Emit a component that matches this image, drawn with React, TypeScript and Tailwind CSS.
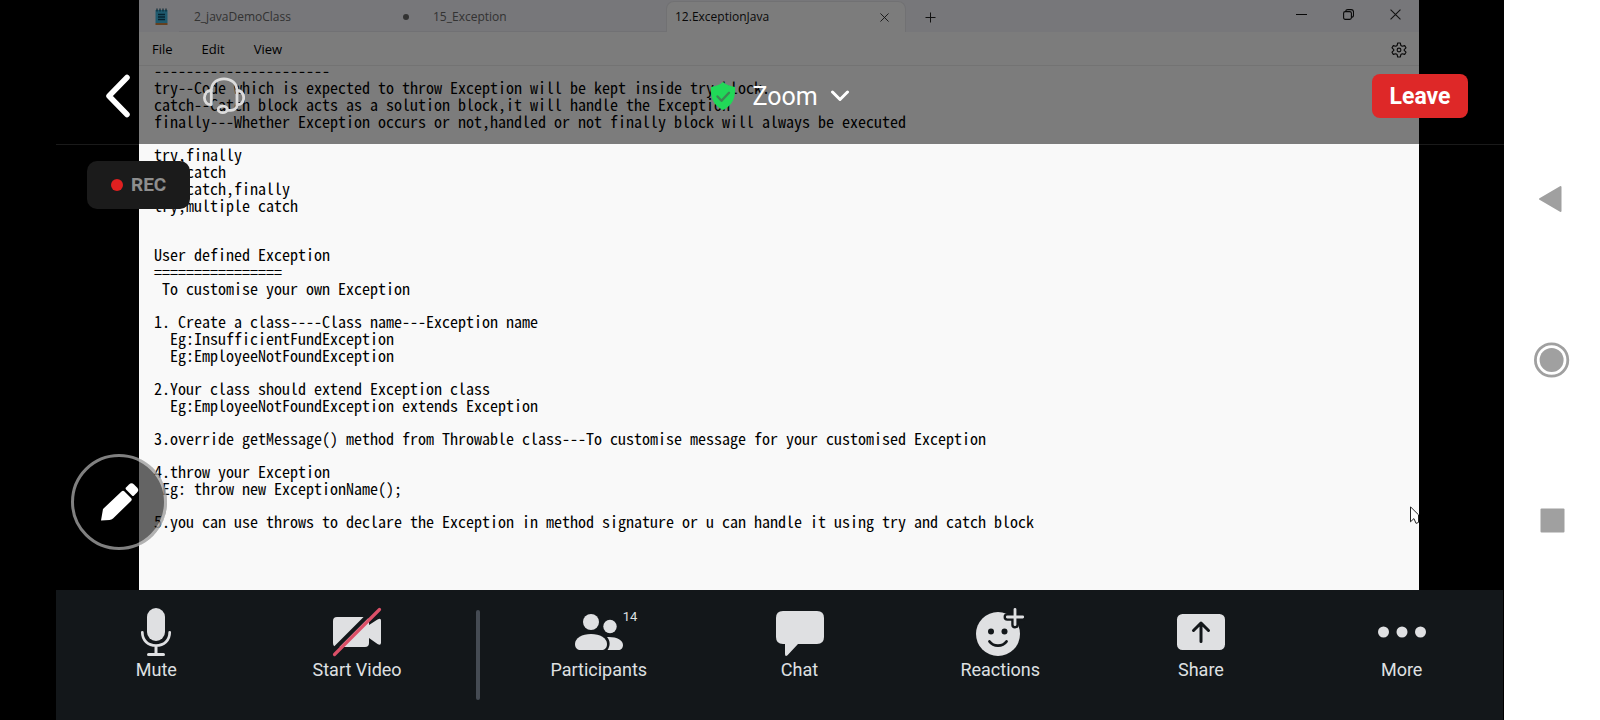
import type { ReactNode } from "react";

const paragraphs: string[][] = [
  [
    "----------------------",
    "try--Code which is expected to throw Exception will be kept inside try block.",
    "catch--Catch block acts as a solution block,it will handle the Exception",
    "finally---Whether Exception occurs or not,handled or not finally block will always be executed",
  ],
  ["try,finally", "try,catch", "try,catch,finally", "try,multiple catch"],
  ["User defined Exception", "================", " To customise your own Exception"],
  [
    "1. Create a class----Class name---Exception name",
    "  Eg:InsufficientFundException",
    "  Eg:EmployeeNotFoundException",
  ],
  [
    "2.Your class should extend Exception class",
    "  Eg:EmployeeNotFoundException extends Exception",
  ],
  [
    "3.override getMessage() method from Throwable class---To customise message for your customised Exception",
  ],
  ["4.throw your Exception", " Eg: throw new ExceptionName();"],
  [
    "5.you can use throws to declare the Exception in method signature or u can handle it using try and catch block",
  ],
];

function NotepadIcon() {
  return (
    <svg width="13" height="18" viewBox="0 0 13 18" aria-hidden="true">
      <rect x="0.5" y="2" width="12" height="13" fill="#3fb4dc" />
      <rect x="0.5" y="15" width="12" height="2" fill="#c8803f" />
      <path d="M2 0.5v3M5 0.5v3M8 0.5v3M11 0.5v3" stroke="#14506a" strokeWidth="1.2" />
      <path d="M3 6.5h7M3 9h7M3 11.5h7" stroke="#0c4660" strokeWidth="1.3" />
    </svg>
  );
}

function CloseIcon({ size }: { size: number }) {
  return (
    <svg width={size} height={size} viewBox="0 0 10 10" fill="none" stroke="#222" strokeWidth="1" aria-hidden="true">
      <path d="M0.5 0.5l9 9M9.5 0.5l-9 9" />
    </svg>
  );
}

function Notepad() {
  return (
    <section
      aria-label="Notepad"
      className="relative flex h-full flex-col overflow-hidden bg-[#f9f9f9] font-['Open_Sans','Noto_Sans',sans-serif] text-black"
    >
      <div className="flex h-8 items-end bg-[#eeeef4] text-[12px] text-[#666]">
        <div className="flex h-8 w-10 items-center justify-center pt-0.5 pl-1">
          <NotepadIcon />
        </div>
        <button className="flex h-8 w-[246px] items-center justify-between border-b border-[#e2e2e8] pt-0.5 pr-4 pl-[15px]">
          2_javaDemoClass
          <span className="size-1.5 rounded-full bg-[#666]" />
        </button>
        <button className="flex h-8 w-[241px] items-center border-b border-[#e2e2e8] pt-0.5 pl-2">
          15_Exception
        </button>
        <div className="flex h-[31px] w-[240px] items-center justify-between rounded-t-lg border-x border-t border-[#e2e2e6] bg-[#f9f9f9] pr-4 pl-2 font-medium text-[#111]">
          12.ExceptionJava
          <button aria-label="Close tab">
            <CloseIcon size={9} />
          </button>
        </div>
        <button aria-label="New tab" className="flex h-8 w-12 items-center justify-center pt-0.5">
          <svg width="11" height="11" viewBox="0 0 11 11" stroke="#222" strokeWidth="1" aria-hidden="true">
            <path d="M5.5 0.5v10M0.5 5.5h10" />
          </svg>
        </button>
        <div className="ml-auto flex h-7 items-center gap-9 self-start pr-[18px]">
          <button aria-label="Minimize">
            <svg width="11" height="11" viewBox="0 0 11 11" stroke="#111" aria-hidden="true">
              <path d="M0 5.5h11" />
            </svg>
          </button>
          <button aria-label="Restore">
            <svg width="11" height="11" viewBox="0 0 11 11" fill="none" stroke="#111" strokeWidth="1.1" aria-hidden="true">
              <rect x="0.6" y="2.6" width="7.8" height="7.8" rx="1.6" />
              <path d="M2.6 2.4C2.8 1.2 3.5 0.6 4.8 0.6h3.4c1.5 0 2.3 0.8 2.3 2.3v3.4c0 1.2-0.6 1.9-1.8 2.1" />
            </svg>
          </button>
          <button aria-label="Close">
            <CloseIcon size={11} />
          </button>
        </div>
      </div>
      <div className="flex h-[34px] items-center justify-between border-b border-[#e6e6e6] pt-0.5 pr-3 pl-[13px] text-[13px]">
        <nav className="flex gap-[29px]">
          <button>File</button>
          <button>Edit</button>
          <button>View</button>
        </nav>
        <button aria-label="Settings">
          <svg width="16" height="16" viewBox="0 0 16 16" fill="none" stroke="#111" strokeWidth="1.1" strokeLinejoin="round" aria-hidden="true">
            <path d="M6.700 1h2.600l.6 2.500 1.300.8 2.500-.7 1.300 2.200-1.800 1.800v.8l1.800 1.800-1.300 2.200-2.500-.7-1.300.8-.6 2.500H6.700l-.6-2.500-1.300-.8-2.500.7L1 10.200l1.800-1.800v-.8L1 5.800l1.300-2.200 2.500.7 1.300-.8z" />
            <circle cx="8" cy="8" r="1.900" />
          </svg>
        </button>
      </div>
      <div className="-mt-1 flex flex-col gap-4 pl-[15px] font-['Noto_Sans_Mono_CJK_SC','Liberation_Mono',monospace] text-[16px] leading-[17px]">
        {paragraphs.map((lines, i) => (
          <p key={i} className={i === 2 ? "mt-4 whitespace-pre" : "whitespace-pre"}>
            {lines.join("\n")}
          </p>
        ))}
      </div>
      <svg className="absolute right-0 bottom-[66px]" width="9" height="18" viewBox="0 0 9 18" aria-hidden="true">
        <path d="M0.5 0.8v15l3.4-3.2 2.2 4.8 2.4-1V8.8z" fill="#fff" stroke="#222" />
      </svg>
    </section>
  );
}

function MeetingHeader() {
  return (
    <header className="absolute inset-x-0 top-0 grid h-[145px] grid-cols-3 items-center border-b border-white/10 bg-black/50 bg-clip-padding px-9 pt-12 text-white">
      <div className="flex items-center gap-[71px] pl-3">
        <button aria-label="Back">
          <svg width="28" height="44" viewBox="0 0 28 44" fill="none" stroke="#fff" strokeWidth="5.500" strokeLinecap="round" strokeLinejoin="round" aria-hidden="true">
            <path d="M23 3.500L5 22l18 18.500" />
          </svg>
        </button>
        <button aria-label="Audio source">
          <svg width="42" height="38" viewBox="0 0 42 38" fill="none" stroke="#dcdcdc" strokeWidth="2.800" strokeLinecap="round" aria-hidden="true">
            <path d="M8.300 14C8.300 6.500 13.500 1.800 21 1.800S34 6.500 34 14" />
            <path d="M8.300 13.500v14C4.400 28 1.400 25 1.400 20.800s3-7.600 6.900-7.300z" strokeLinejoin="round" />
            <path d="M34 13.500v14c3.900.5 6.700-2.500 6.700-6.700s-2.800-7.600-6.700-7.300z" strokeLinejoin="round" />
            <path d="M34 27.500c0 3.800-2.600 5.800-6 5.800h-3.500" />
            <ellipse cx="19.800" cy="32.400" rx="4.600" ry="3.200" />
          </svg>
        </button>
      </div>
      <button className="flex items-center justify-self-center text-[25px] leading-8">
        <svg width="26" height="28" viewBox="0 0 26 28" aria-hidden="true">
          <path d="M13 0c3.400 2.800 7.400 4.400 12 5 .7 11-2.600 18.500-12 23C3.600 23.500.3 16 1 5c4.600-.6 8.600-2.200 12-5z" fill="#21d858" />
          <path d="M7.500 14.500l4 4.300 7.500-8" fill="none" stroke="#3d8553" strokeWidth="2.400" strokeLinecap="round" strokeLinejoin="round" />
        </svg>
        <span className="mr-3 ml-4 pt-0.5">Zoom</span>
        <svg width="20" height="12" viewBox="0 0 20 12" fill="none" stroke="#fff" strokeWidth="3" strokeLinecap="round" strokeLinejoin="round" aria-hidden="true">
          <path d="M2.500 2l7.500 7.500L17.500 2" />
        </svg>
      </button>
      <button className="h-11 w-24 justify-self-end rounded-lg bg-[#de2828] pt-0.5 text-[23px] font-bold">Leave</button>
    </header>
  );
}

function ToolButton({ label, badge, children }: { label: string; badge?: string; children: ReactNode }) {
  return (
    <button className="flex flex-1 flex-col items-center pt-[18px] text-[#dfe0e2]">
      <span className="relative">
        <svg width="48" height="48" viewBox="0 0 48 48" fill="#dfe0e2" overflow="visible" aria-hidden="true">
          {children}
        </svg>
        {badge && <span className="absolute top-px left-full text-[13px] leading-4">{badge}</span>}
      </span>
      <span className="mt-0.5 text-[18px] leading-6">{label}</span>
    </button>
  );
}

function Toolbar() {
  return (
    <footer className="mr-px flex h-[130px] bg-[#13171a] pr-px">
      <ToolButton label="Mute">
        <rect x="15" y="0" width="18" height="33" rx="9" />
        <path d="M10.300 24.300c0 8.200 5.700 13.200 13.700 13.200s13.700-5 13.700-13.200" fill="none" stroke="#dfe0e2" strokeWidth="2.700" strokeLinecap="round" />
        <rect x="22.500" y="37" width="3" height="9" />
        <rect x="15" y="45" width="18" height="3" rx="1.500" />
      </ToolButton>
      <ToolButton label="Start Video">
        <path d="M4 9h28q4 0 4 4v4l8.500-5.500q3.500-2 3.500 1v22q0 3.500-3.500 1.500L36 30v5q0 4-4 4H4q-4 0-4-4V13q0-4 4-4z" />
        <path d="M-1 43.500L44-1.500" stroke="#13171a" strokeWidth="4" />
        <path d="M1.500 46.500l45-45" stroke="#dc5068" strokeWidth="3.200" strokeLinecap="round" />
      </ToolButton>
      <div className="w-[41px] pt-5">
        <div className="mx-auto h-[90px] w-1 rounded-sm bg-[#454b53]" />
      </div>
      <ToolButton label="Participants" badge="14">
        <circle cx="16" cy="14" r="8" />
        <circle cx="35" cy="18.500" r="6.700" />
        <path d="M0 36c0-6 7-10 16-10s16 4 16 10c0 4-2.500 6-5.500 6h-21C2.500 42 0 40 0 36z" />
        <path d="M32 29c9.500-.5 16 3 16 8 0 3-2 5-4.500 5H32.500c2.800-4 3-9-.5-13z" />
      </ToolButton>
      <ToolButton label="Chat">
        <path d="M7 3h34q7 0 7 7v19q0 7-7 7H22L11.500 47.300Q9 49 9 46V36H7q-7 0-7-7V10q0-7 7-7z" />
      </ToolButton>
      <ToolButton label="Reactions">
        <circle cx="22" cy="26" r="22" />
        <path d="M39 1v15.700M31.300 9h15.400" stroke="#13171a" strokeWidth="7.500" strokeLinecap="round" />
        <path d="M39 1.300v15.400M31.300 9h15.400" stroke="#dfe0e2" strokeWidth="2.800" strokeLinecap="round" />
        <circle cx="15" cy="23.500" r="3" fill="#13171a" />
        <circle cx="28.500" cy="23.500" r="3" fill="#13171a" />
        <path d="M13.500 33.500c4 5.500 13 5.500 17 0" fill="none" stroke="#13171a" strokeWidth="2.800" strokeLinecap="round" />
      </ToolButton>
      <ToolButton label="Share">
        <rect y="6" width="48" height="36" rx="5.500" />
        <path d="M24 33.500V15M16.500 22.500L24 15l7.500 7.500" fill="none" stroke="#13171a" strokeWidth="3" strokeLinecap="round" strokeLinejoin="round" />
      </ToolButton>
      <ToolButton label="More">
        <circle cx="5.500" cy="24" r="5.500" />
        <circle cx="24" cy="24" r="5.500" />
        <circle cx="42.500" cy="24" r="5.500" />
      </ToolButton>
    </footer>
  );
}

function SystemNav() {
  return (
    <nav aria-label="System navigation" className="flex w-24 flex-col items-center justify-center gap-[125px] bg-white">
      <button aria-label="Back">
        <svg width="36" height="36" viewBox="0 0 36 36" aria-hidden="true">
          <path d="M6 18L26.500 6v24z" fill="#a0a0a0" stroke="#a0a0a0" strokeWidth="2" strokeLinejoin="round" />
        </svg>
      </button>
      <button aria-label="Home">
        <svg width="36" height="36" viewBox="0 0 36 36" aria-hidden="true">
          <circle cx="17.600" cy="18" r="16.200" fill="none" stroke="#a0a0a0" strokeWidth="2.800" />
          <circle cx="17.600" cy="18" r="12" fill="#a0a0a0" />
        </svg>
      </button>
      <button aria-label="Recent apps">
        <svg width="36" height="36" viewBox="0 0 36 36" aria-hidden="true">
          <rect x="6.500" y="5.500" width="24" height="24" rx="1" fill="#a0a0a0" />
        </svg>
      </button>
    </nav>
  );
}

export default function App() {
  return (
    <div className="flex min-h-screen bg-black font-[Roboto,sans-serif]">
      <main className="ml-14 flex min-w-0 flex-1 flex-col">
        <div className="relative flex-1 pr-[85px] pl-[83px]">
          <Notepad />
          <MeetingHeader />
          <div className="absolute top-[161px] left-[31px] flex h-12 items-center gap-2 rounded-[10px] bg-[#1b1b1b] px-6 text-[19px] font-bold text-[#8e8e8e]">
            <span className="size-3 rounded-full bg-[#e02020]" />
            REC
          </div>
          <button
            aria-label="Annotate"
            className="absolute bottom-10 left-[15px] flex size-24 items-center justify-center rounded-full bg-black/60"
          >
            <svg width="96" height="96" viewBox="0 0 96 96" aria-hidden="true">
              <circle cx="48" cy="48" r="46.500" fill="none" stroke="#fff" strokeOpacity="0.500" strokeWidth="3" />
              <path d="M30 66.500l2-11.500L50.500 37.500q1.500-1.500 3 0l6.500 6.500q1.500 1.500 0 3L42 64.500q-1.500 1.300-3.500 1.500z" fill="#fff" />
              <path d="M55 33.500l3-3q2.500-2.500 5 0l3 3q2.500 2.500 0 5l-3 3q-1 1-2 0l-6-6q-1-1 0-2z" fill="#fff" />
            </svg>
          </button>
        </div>
        <Toolbar />
      </main>
      <SystemNav />
    </div>
  );
}
